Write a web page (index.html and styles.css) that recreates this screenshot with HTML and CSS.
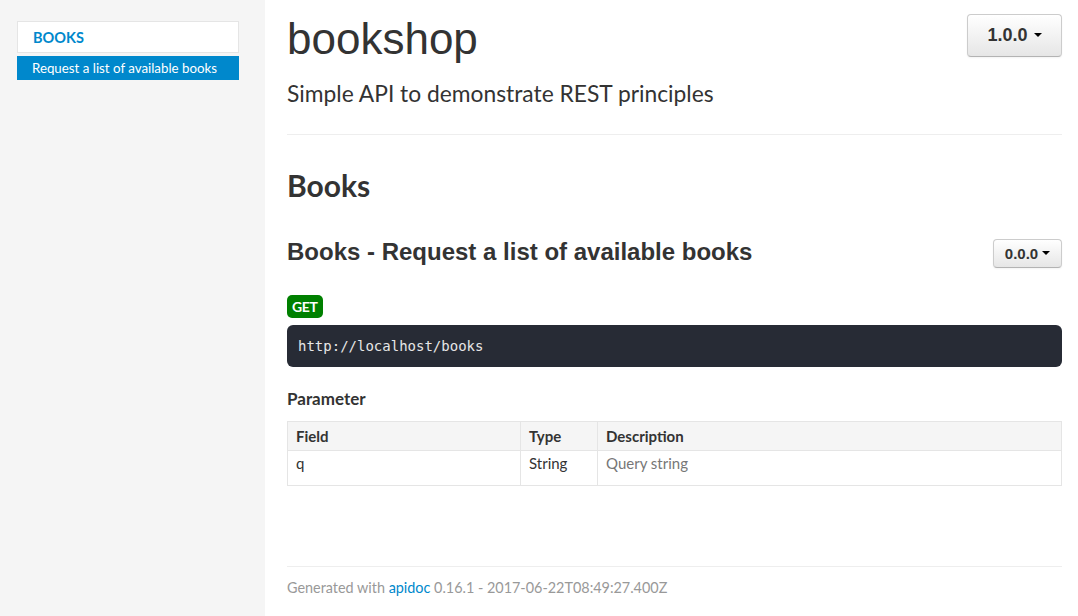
FILE: index.html
```html
<!DOCTYPE html>
<html>
<head>
<meta charset="utf-8">
<link rel="stylesheet" href="styles.css">
</head>
<body>
<div class="page">
  <aside class="sidebar">
    <div class="nav">
      <div class="nav-header">BOOKS</div>
      <div class="nav-item active">Request a list of available books</div>
    </div>
  </aside>
  <main class="content">
    <header class="top">
      <div class="top-text">
        <h1 class="title">bookshop</h1>
        <p class="subtitle">Simple API to demonstrate REST principles</p>
      </div>
      <button class="btn btn-lg">1.0.0 <span class="caret"></span></button>
    </header>
    <hr class="rule">
    <h2 class="group">Books</h2>
    <div class="article-head">
      <h3 class="article-title">Books - Request a list of available books</h3>
      <button class="btn btn-sm">0.0.0 <span class="caret"></span></button>
    </div>
    <span class="badge">GET</span>
    <pre class="url">http://localhost/books</pre>
    <h4 class="param-title">Parameter</h4>
    <table class="params">
      <thead>
        <tr><th class="c1">Field</th><th class="c2">Type</th><th>Description</th></tr>
      </thead>
      <tbody>
        <tr><td class="c1 field">q</td><td class="c2">String</td><td class="desc">Query string</td></tr>
      </tbody>
    </table>
    <footer class="footer">
      Generated with <a class="link">apidoc</a> 0.16.1 - 2017-06-22T08:49:27.400Z
    </footer>
  </main>
</div>
</body>
</html>
```
FILE: styles.css
```css
html, body {
  margin: 0;
  padding: 0;
  height: 100%;
}
body {
  font-family: "Lato", "Liberation Sans", sans-serif;
  color: #333;
  background: #fff;
}
.page {
  display: flex;
  min-height: 616px;
}
.sidebar {
  width: 265px;
  flex: none;
  background: #f5f5f5;
  padding: 21px 26px 0 17px;
  box-sizing: border-box;
}
.nav {
  display: flex;
  flex-direction: column;
  gap: 3px;
}
.nav-header {
  background: #fff;
  border: 1px solid #e5e5e5;
  height: 30px;
  line-height: 31px;
  padding-left: 15px;
  color: #0088cc;
  font-weight: 700;
  font-size: 14.5px;
}
.nav-item {
  background: #0088cc;
  color: #fff;
  font-size: 13.3px;
  height: 24px;
  line-height: 24px;
  padding-left: 15px;
}
.content {
  flex: 1;
  padding: 13px 16px 0 22px;
  min-width: 0;
}
.top {
  display: flex;
  justify-content: space-between;
  align-items: flex-start;
}
.title {
  margin: 0;
  font-family: "Liberation Sans", Arial, sans-serif;
  font-weight: 400;
  font-size: 44px;
  line-height: 52px;
  color: #333;
}
.subtitle {
  margin: 13px 0 0;
  font-size: 22.8px;
  line-height: 30px;
  color: #333;
}
.btn {
  font-family: "Liberation Sans", Arial, sans-serif;
  font-weight: 700;
  color: #333;
  background: linear-gradient(#fff, #e6e6e6);
  border: 1px solid #ccc;
  border-bottom-color: #b3b3b3;
  border-radius: 4px;
  box-shadow: inset 0 1px 0 rgba(255,255,255,.2), 0 1px 2px rgba(0,0,0,.05);
  display: inline-flex;
  align-items: center;
  justify-content: center;
}
.btn-lg {
  margin-top: 1px;
  width: 95px;
  height: 43px;
  font-size: 18px;
  gap: 6px;
}
.btn-sm {
  width: 69px;
  height: 29px;
  font-size: 15px;
  gap: 4px;
  margin-top: 3px;
}
.caret {
  width: 0;
  height: 0;
  border-left: 4px solid transparent;
  border-right: 4px solid transparent;
  border-top: 4px solid #000;
  margin-top: -2px;
}
.rule {
  border: 0;
  border-top: 1px solid #eee;
  margin: 26px 0 0;
}
.group {
  margin: 32px 0 0;
  font-size: 30px;
  font-weight: 700;
  line-height: 36px;
}
.article-head {
  display: flex;
  justify-content: space-between;
  align-items: flex-start;
  margin-top: 33px;
}
.article-title {
  margin: 0;
  font-family: "Liberation Sans", Arial, sans-serif;
  font-size: 24px;
  font-weight: 700;
  line-height: 32px;
}
.badge {
  display: inline-block;
  margin-top: 27px;
  background: #008000;
  color: #fff;
  font-weight: 700;
  font-size: 14px;
  line-height: 23px;
  height: 23px;
  padding: 0 5px;
  border-radius: 5px;
  letter-spacing: -0.3px;
}
.url {
  margin: 7px 0 0;
  background: #272b35;
  color: #e6e6e6;
  border-radius: 6px;
  height: 42px;
  line-height: 42px;
  padding: 0 11px;
  font-family: "DejaVu Sans Mono", monospace;
  font-size: 14px;
}
.param-title {
  margin: 21px 0 0;
  font-size: 17px;
  font-weight: 700;
  line-height: 22px;
}
.params {
  margin-top: 11px;
  width: 100%;
  border-collapse: collapse;
  font-size: 15px;
}
.params th, .params td {
  border: 1px solid #e5e5e5;
  text-align: left;
  padding: 0 8px;
}
.params th {
  background: #f5f5f5;
  height: 28px;
  font-weight: 700;
}
.params td {
  height: 31px;
  vertical-align: top;
  padding-top: 3px;
}
.params .c1 { width: 216px; }
.params .c2 { width: 60px; }
.desc { color: #777; }
.footer {
  margin-top: 80px;
  border-top: 1px solid #eee;
  padding-top: 12px;
  font-size: 14.4px;
  color: #999;
}
.link { color: #0088cc; text-decoration: none; }
```
